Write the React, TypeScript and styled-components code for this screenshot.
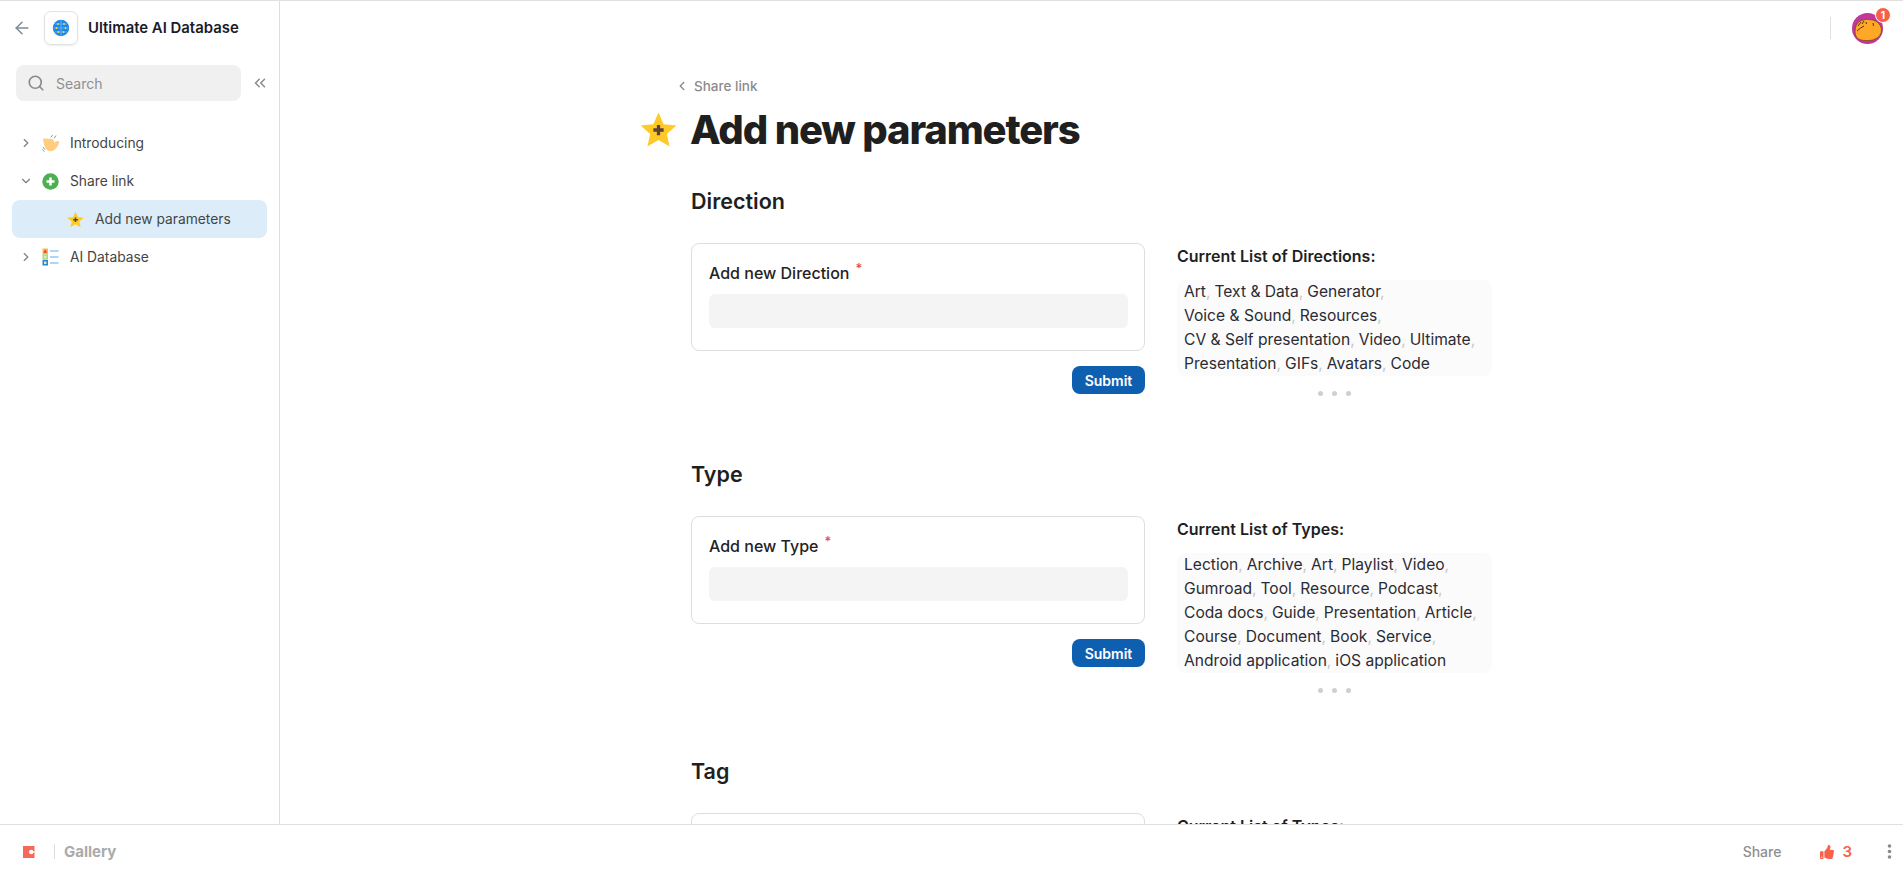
import React from 'react'
import styled, { createGlobalStyle } from 'styled-components'
import { ArrowLeft, ChevronDown, ChevronLeft, ChevronRight, ChevronsLeft, Search } from 'lucide-react'
import { FaThumbsUp } from 'react-icons/fa'

const GlobalStyle = createGlobalStyle`
  html, body {
    margin: 0;
    height: 100%;
    background: #fff;
    font-family: Inter, "Noto Sans", sans-serif;
    color: #1f1f1f;
    overflow: hidden;
  }
  * {
    box-sizing: border-box;
  }
`

const Shell = styled.div`
  width: 100%;
  height: 878px;
  display: flex;
  flex-direction: column;
  border-top: 1px solid #e0e0e0;
`

const Body = styled.div`
  flex: 1;
  min-height: 0;
  display: flex;
`

const Sidebar = styled.aside`
  width: 280px;
  flex: none;
  border-right: 1px solid #dedede;
  padding: 10px 12px 0;
`

const DocHeader = styled.div`
  display: flex;
  align-items: center;
  height: 34px;
  margin-bottom: 20px;
  color: #7a7a7a;
`

const BackButton = styled.span`
  display: flex;
  margin: 0 12px 0 0;
  color: #7c8a94;
`

const LogoBox = styled.div`
  width: 34px;
  height: 34px;
  border: 1px solid #e2e2e2;
  border-radius: 7px;
  box-shadow: 0 1px 2px rgba(0, 0, 0, 0.08);
  display: flex;
  align-items: center;
  justify-content: center;
`

const DocTitle = styled.div`
  margin-left: 10px;
  font-size: 14.9px;
  font-weight: 600;
  color: #1b1b2a;
`

const SearchRow = styled.div`
  display: flex;
  align-items: center;
  margin: 0 0 23px 4px;
`

const SearchBox = styled.div`
  width: 225px;
  height: 36px;
  flex: none;
  background: #f0f0f0;
  border-radius: 8px;
  display: flex;
  align-items: center;
  padding-left: 11px;
  gap: 11px;
  font-size: 14px;
  color: #8f8f8f;
`

const CollapseButton = styled.span`
  display: flex;
  flex: none;
  margin-left: 10px;
  color: #8a8a8a;
`

const TreeRow = styled.div<{ $active?: boolean; $depth?: number }>`
  height: 38px;
  width: 255px;
  display: flex;
  align-items: center;
  padding-left: ${props => (props.$depth ? 52 : 7)}px;
  border-radius: 8px;
  font-size: 13.8px;
  color: #454545;
  background: ${props => (props.$active ? '#dcedf9' : 'transparent')};
`

const TreeCaret = styled.span`
  width: 20px;
  display: flex;
  color: #7f7f7f;
`

const TreeIcon = styled.span`
  width: 17px;
  height: 18px;
  margin-right: 11px;
  margin-left: 3px;
  display: flex;
  align-items: center;
  justify-content: center;
`

const Main = styled.main`
  flex: 1;
  min-width: 0;
  overflow: hidden;
`

const TopBar = styled.div`
  height: 54px;
  display: flex;
  align-items: center;
  justify-content: flex-end;
  padding-right: 20px;
`

const TopDivider = styled.div`
  width: 1px;
  height: 22px;
  background: #e0e0e0;
  margin-right: 21px;
`

const Avatar = styled.div`
  position: relative;
  width: 31px;
  height: 31px;
  margin-top: 1px;
`

const Badge = styled.span`
  position: absolute;
  top: -6px;
  right: -8px;
  width: 16px;
  height: 16px;
  border: 1px solid #fff;
  border-radius: 50%;
  background: #f8604a;
  color: #fff;
  font-size: 10px;
  font-weight: 700;
  display: flex;
  align-items: center;
  justify-content: center;
`

const Page = styled.div`
  width: 801px;
  margin: 0 auto;
`

const Crumb = styled.div`
  display: flex;
  align-items: center;
  gap: 5px;
  height: 20px;
  margin: 21px 0 0 -16px;
  font-size: 13.5px;
  font-weight: 500;
  color: #8b8b8b;
`

const TitleRow = styled.div`
  display: flex;
  align-items: center;
  gap: 13px;
  height: 48px;
  margin: 9px 0 33px -51px;
`

const PageTitle = styled.h1`
  margin: 0;
  font-size: 40px;
  font-weight: 800;
  letter-spacing: -1.15px;
  color: #1f1f1f;
`

const Section = styled.section`
  margin-top: 23px;
  padding-bottom: 40px;
`

const Heading = styled.h2`
  margin: 0 0 27px;
  height: 30px;
  line-height: 30px;
  font-size: 21.5px;
  font-weight: 600;
  color: #1f1f1f;
`

const Columns = styled.div`
  display: grid;
  grid-template-columns: 454px 315px;
  column-gap: 32px;
`

const FormCol = styled.div`
  display: flex;
  flex-direction: column;
  align-items: flex-end;
`

const FormCard = styled.div`
  width: 100%;
  height: 108px;
  border: 1px solid #dedede;
  border-radius: 8px;
  padding: 18px 16px 0 17px;
`

const FieldLabel = styled.div`
  font-size: 16px;
  font-weight: 500;
  line-height: 22px;
  color: #232323;
  margin-bottom: 10px;
`

const Required = styled.sup`
  color: #e5484d;
  font-size: 13px;
  line-height: 0;
  margin-left: 6px;
`

const FieldInput = styled.div`
  height: 34px;
  width: 100%;
  background: #f4f4f4;
  border-radius: 6px;
`

const SubmitButton = styled.button`
  margin-top: 15px;
  width: 73px;
  height: 28px;
  border: 0;
  border-radius: 8px;
  background: #0f5fb0;
  color: #fff;
  font-family: inherit;
  font-size: 14px;
  font-weight: 600;
  padding: 0;
`

const ListCol = styled.div`
  padding-top: 1px;
`

const ListTitle = styled.div`
  font-size: 16px;
  font-weight: 600;
  line-height: 24px;
  margin-bottom: 12px;
  color: #1f1f1f;
`

const ListBox = styled.div`
  background: #fbfbfb;
  border-radius: 8px;
  padding: 0 7px;
  font-size: 15.6px;
  line-height: 24px;
  color: #2b2b33;
`

const Token = styled.span`
  display: inline-block;
  white-space: nowrap;
  margin-right: 4px;
`

const Comma = styled.span`
  color: #c8c8c8;
`

const Dots = styled.div`
  display: flex;
  justify-content: center;
  gap: 9px;
  margin-top: 15px;
`

const Dot = styled.span`
  width: 5px;
  height: 5px;
  border-radius: 50%;
  background: #cfcfcf;
`

const Footer = styled.footer`
  height: 54px;
  flex: none;
  border-top: 1px solid #e0e0e0;
  display: flex;
  align-items: center;
  padding: 0 11px 0 23px;
`

const FootDivider = styled.span`
  width: 1px;
  height: 15px;
  background: #dcdcdc;
  margin: 0 9px 0 19px;
`

const GalleryLabel = styled.span`
  flex: 1;
  font-size: 15px;
  font-weight: 700;
  color: #ababab;
`

const ShareLabel = styled.span`
  font-size: 14px;
  font-weight: 500;
  color: #8f8f8f;
  margin-right: 39px;
`

const Votes = styled.span`
  display: flex;
  align-items: center;
  gap: 8px;
  font-size: 15px;
  font-weight: 600;
  color: #f8604a;
  margin-right: 35px;
`

const BrainLogo = () => (
  <svg width="18" height="18" viewBox="0 0 18 18">
    <circle cx="9" cy="9" r="8.2" fill="#1e88e5" />
    <path d="M9 1v16M3 5h12M1.5 9h15M3 13h12" stroke="#64b5f6" strokeWidth="0.9" fill="none" />
    <g fill="#ffd54f">
      <circle cx="6" cy="5" r="0.9" />
      <circle cx="12" cy="5" r="0.9" />
      <circle cx="4.5" cy="9" r="0.9" />
      <circle cx="13.5" cy="9" r="0.9" />
      <circle cx="6.5" cy="13" r="0.9" />
      <circle cx="11.5" cy="13" r="0.9" />
    </g>
  </svg>
)

const WaveIcon = () => (
  <svg width="18" height="18" viewBox="0 0 18 18" style={{ flex: 'none' }}>
    <path d="M1 5 Q1 4.5 2 4.5 L10 5 Q12 5.5 12.5 8.5 L15 7 Q17.5 6.5 17 9 Q15.5 14 11.5 16.5 Q7 18.5 4 15 Q1.5 11 1 5Z" fill="#ffcc80" />
    <path d="M9 3.4 L10.6 1M12 4.4 L14 1.6M1 13 L3 15.8M0.4 15.4 L2.4 17.6" stroke="#4db6ac" strokeWidth="1" fill="none" />
  </svg>
)

const PlusCircle = () => (
  <svg width="17" height="17" viewBox="0 0 17 17">
    <circle cx="8.5" cy="8.5" r="8.2" fill="#4caf50" />
    <path d="M8.5 4.5v8M4.5 8.5h8" stroke="#fff" strokeWidth="2.6" />
  </svg>
)

const StarPlus: React.FC<{ size: number }> = ({ size }) => (
  <svg width={size} height={size} viewBox="0 0 36 36">
    <path d="M18 1.5l5 11.4 12.4 1.2-9.3 8.3 2.7 12.1L18 28.2 7.2 34.5l2.7-12.1L.6 14.1 13 12.9z" fill="#ffca28" />
    <path d="M18 13.5v10M13 18.5h10" stroke="#5d4037" strokeWidth="3.2" />
  </svg>
)

const ListIcon = () => (
  <svg width="17" height="18" viewBox="0 0 17 18">
    <rect x="0.5" y="0.5" width="5.5" height="5.5" fill="#ffb74d" />
    <path d="M3.2 1.2L5 4.8H1.4z" fill="#e53935" />
    <rect x="0.5" y="6.2" width="5.5" height="5.5" fill="#aed581" />
    <rect x="2" y="7.7" width="2.5" height="2.5" fill="#dcedc8" />
    <rect x="0.5" y="12" width="5.5" height="5.5" fill="#1e88e5" />
    <rect x="2" y="13.5" width="2.5" height="2.5" fill="#ffe082" />
    <path d="M8 3h8.5M8 9h8.5M8 15h8.5" stroke="#90caf9" strokeWidth="1.6" />
  </svg>
)

const AvatarArt = () => (
  <svg width="31" height="31" viewBox="0 0 31 31">
    <circle cx="15.5" cy="15.5" r="15.5" fill="#c2379b" />
    <path d="M3 19 Q3 11 8 8 Q14 5 21 7 Q28 9 29.5 16 Q30 24 21 27 Q10 29 5 25 Q3 22 3 19Z" fill="#ffa726" stroke="#6b4210" strokeWidth="0.7" />
    <path d="M6 13 L9 9 M10 11 L12 8 M14 9 L14.5 11 M21 10 L21.5 13 M5 18 Q8 15 12 13" stroke="#3e2723" strokeWidth="0.9" fill="none" />
  </svg>
)

const CodaLogo = () => (
  <svg width="12" height="12" viewBox="0 0 12 12">
    <rect x="0" y="0" width="11.5" height="12" fill="#f8685a" />
    <circle cx="8.2" cy="6" r="2.2" fill="#fff" />
    <rect x="8.2" y="5.3" width="3.3" height="1.4" fill="#fff" />
  </svg>
)

const MoreDots = () => (
  <svg width="5" height="15" viewBox="0 0 5 15" fill="#8a8a8a">
    <circle cx="2.5" cy="2" r="1.8" />
    <circle cx="2.5" cy="7.5" r="1.8" />
    <circle cx="2.5" cy="13" r="1.8" />
  </svg>
)

const directions = [
  'Art', 'Text & Data', 'Generator', 'Voice & Sound', 'Resources', 'CV & Self presentation',
  'Video', 'Ultimate', 'Presentation', 'GIFs', 'Avatars', 'Code',
]

const types = [
  'Lection', 'Archive', 'Art', 'Playlist', 'Video', 'Gumroad', 'Tool', 'Resource', 'Podcast',
  'Coda docs', 'Guide', 'Presentation', 'Article', 'Course', 'Document', 'Book', 'Service',
  'Android application', 'iOS application',
]

const ParamSection: React.FC<{ title: string; field: string; listTitle: string; items: string[] }> = ({
  title,
  field,
  listTitle,
  items,
}) => (
  <Section>
    <Heading>{title}</Heading>
    <Columns>
      <FormCol>
        <FormCard>
          <FieldLabel>
            {field}
            <Required>*</Required>
          </FieldLabel>
          <FieldInput />
        </FormCard>
        <SubmitButton>Submit</SubmitButton>
      </FormCol>
      <ListCol>
        <ListTitle>{listTitle}</ListTitle>
        <ListBox>
          {items.map((item, i) => (
            <Token key={item}>
              {item}
              {i < items.length - 1 && <Comma>,</Comma>}
            </Token>
          ))}
        </ListBox>
        <Dots>
          <Dot />
          <Dot />
          <Dot />
        </Dots>
      </ListCol>
    </Columns>
  </Section>
)

const App: React.FC = () => (
  <>
    <GlobalStyle />
    <Shell>
      <Body>
        <Sidebar>
          <DocHeader>
            <BackButton>
              <ArrowLeft size={20} strokeWidth={1.75} />
            </BackButton>
            <LogoBox>
              <BrainLogo />
            </LogoBox>
            <DocTitle>Ultimate AI Database</DocTitle>
          </DocHeader>
          <SearchRow>
            <SearchBox>
              <Search size={18} strokeWidth={2.2} color="#8a8a8a" />
              Search
            </SearchBox>
            <CollapseButton>
              <ChevronsLeft size={18} strokeWidth={2} />
            </CollapseButton>
          </SearchRow>
          <TreeRow>
            <TreeCaret>
              <ChevronRight size={14} strokeWidth={2} />
            </TreeCaret>
            <TreeIcon>
              <WaveIcon />
            </TreeIcon>
            Introducing
          </TreeRow>
          <TreeRow>
            <TreeCaret>
              <ChevronDown size={14} strokeWidth={2} />
            </TreeCaret>
            <TreeIcon>
              <PlusCircle />
            </TreeIcon>
            Share link
          </TreeRow>
          <TreeRow $active $depth={1}>
            <TreeIcon>
              <StarPlus size={17} />
            </TreeIcon>
            Add new parameters
          </TreeRow>
          <TreeRow>
            <TreeCaret>
              <ChevronRight size={14} strokeWidth={2} />
            </TreeCaret>
            <TreeIcon>
              <ListIcon />
            </TreeIcon>
            AI Database
          </TreeRow>
        </Sidebar>
        <Main>
          <TopBar>
            <TopDivider />
            <Avatar>
              <AvatarArt />
              <Badge>1</Badge>
            </Avatar>
          </TopBar>
          <Page>
            <Crumb>
              <ChevronLeft size={14} strokeWidth={2.4} />
              Share link
            </Crumb>
            <TitleRow>
              <StarPlus size={37} />
              <PageTitle>Add new parameters</PageTitle>
            </TitleRow>
            <ParamSection title="Direction" field="Add new Direction" listTitle="Current List of Directions:" items={directions} />
            <ParamSection title="Type" field="Add new Type" listTitle="Current List of Types:" items={types} />
            <ParamSection title="Tag" field="Add new Tag" listTitle="Current List of Types:" items={types} />
          </Page>
        </Main>
      </Body>
      <Footer>
        <CodaLogo />
        <FootDivider />
        <GalleryLabel>Gallery</GalleryLabel>
        <ShareLabel>Share</ShareLabel>
        <Votes>
          <FaThumbsUp size={14} />3
        </Votes>
        <MoreDots />
      </Footer>
    </Shell>
  </>
)

export default App
